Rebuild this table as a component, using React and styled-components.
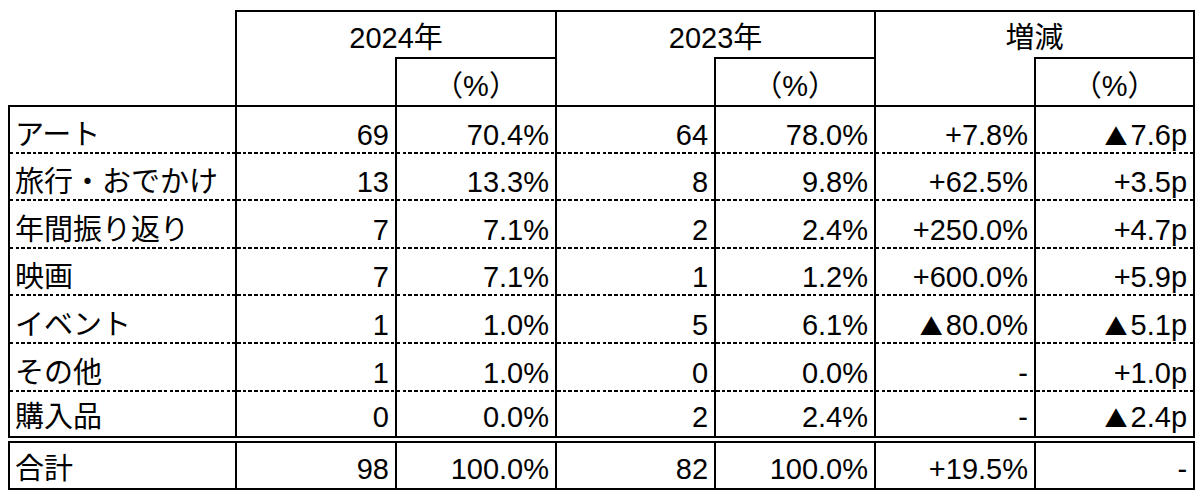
import React from 'react';
import styled, { createGlobalStyle, css } from 'styled-components';

const Global = createGlobalStyle`
  html, body { margin: 0; padding: 0; background: #fff; }
  body {
    font-family: 'Liberation Sans', Arial, 'Noto Sans CJK JP', sans-serif;
    color: #000;
  }
`;

const Page = styled.div`
  padding: 10px 0 0 8px;
`;

const Table = styled.table`
  border-collapse: collapse;
  table-layout: fixed;
  width: 1187px;
  font-size: 29px;
  line-height: 34px;
`;

const Row = styled.tr`
  height: ${(p) => p.$h}px;
`;

const baseCell = css`
  padding: 0 6px 2px;
  vertical-align: bottom;
  white-space: nowrap;
  font-weight: normal;
  overflow: hidden;
`;

const Corner = styled.th`
  ${baseCell};
  border: none;
`;

const GroupHead = styled.th`
  ${baseCell};
  text-align: center;
  border-top: 2px solid #000;
  border-left: 2px solid #000;
  border-right: 2px solid #000;
`;

const SubBlank = styled.th`
  ${baseCell};
  border-left: 2px solid #000;
`;

const SubHead = styled.th`
  ${baseCell};
  text-align: center;
  border-top: 2px solid #000;
  border-left: 2px solid #000;
  border-right: 2px solid #000;
`;

const dashLine = css`
  background-image: repeating-linear-gradient(
    to right,
    #000 0 3.5px,
    transparent 3.5px 5.7px
  );
  background-repeat: no-repeat;
  background-position: left bottom;
  background-size: 100% 2px;
`;

const Cell = styled.td`
  ${baseCell};
  text-align: ${(p) => (p.$label ? 'left' : 'right')};
  padding-left: ${(p) => (p.$label ? '5px' : '6px')};
  border-left: 2px solid #000;
  border-right: 2px solid #000;
  ${(p) => p.$first && css`border-top: 2px solid #000;`}
  ${(p) => p.$dashed && dashLine}
`;

const TotalCell = styled(Cell)`
  border-top: 7px double #000;
  border-bottom: 2px solid #000;
`;

const Tri = styled.span`
  font-family: 'Noto Sans CJK JP', sans-serif;
  font-size: 23px;
  margin-right: 3px;
`;

const widths = [227, 160, 160, 159, 160, 160, 159];

const rows = [
  ['アート', '69', '70.4%', '64', '78.0%', '+7.8%', '▲7.6p'],
  ['旅行・おでかけ', '13', '13.3%', '8', '9.8%', '+62.5%', '+3.5p'],
  ['年間振り返り', '7', '7.1%', '2', '2.4%', '+250.0%', '+4.7p'],
  ['映画', '7', '7.1%', '1', '1.2%', '+600.0%', '+5.9p'],
  ['イベント', '1', '1.0%', '5', '6.1%', '▲80.0%', '▲5.1p'],
  ['その他', '1', '1.0%', '0', '0.0%', '-', '+1.0p'],
  ['購入品', '0', '0.0%', '2', '2.4%', '-', '▲2.4p'],
];

const total = ['合計', '98', '100.0%', '82', '100.0%', '+19.5%', '-'];

function Value({ text }) {
  if (text.startsWith('▲')) {
    return (
      <>
        <Tri>▲</Tri>
        {text.slice(1)}
      </>
    );
  }
  return text;
}

export default function App() {
  return (
    <>
      <Global />
      <Page>
        <Table>
          <colgroup>
            {widths.map((w, i) => (
              <col key={i} style={{ width: w }} />
            ))}
          </colgroup>
          <thead>
            <Row $h={47}>
              <Corner rowSpan={2} />
              <GroupHead colSpan={2}>2024年</GroupHead>
              <GroupHead colSpan={2}>2023年</GroupHead>
              <GroupHead colSpan={2}>増減</GroupHead>
            </Row>
            <Row $h={48}>
              <SubBlank />
              <SubHead>（%）</SubHead>
              <SubBlank />
              <SubHead>（%）</SubHead>
              <SubBlank />
              <SubHead>（%）</SubHead>
            </Row>
          </thead>
          <tbody>
            {rows.map((r, ri) => (
              <Row key={ri} $h={47.6}>
                {r.map((v, ci) => (
                  <Cell
                    key={ci}
                    $label={ci === 0}
                    $first={ri === 0}
                    $dashed={ri < rows.length - 1}
                  >
                    <Value text={v} />
                  </Cell>
                ))}
              </Row>
            ))}
          </tbody>
          <tbody>
            <Row $h={50}>
              {total.map((v, ci) => (
                <TotalCell key={ci} $label={ci === 0}>
                  <Value text={v} />
                </TotalCell>
              ))}
            </Row>
          </tbody>
        </Table>
      </Page>
    </>
  );
}
